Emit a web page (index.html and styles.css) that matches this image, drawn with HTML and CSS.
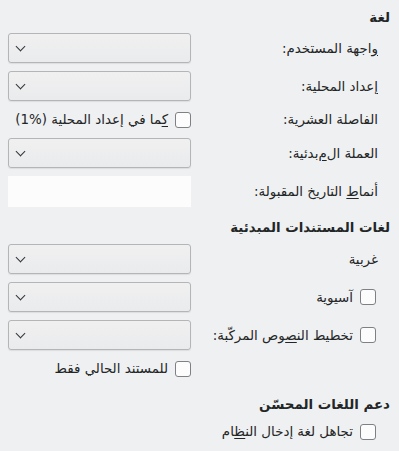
FILE: index.html
```
<!DOCTYPE html>
<html lang="ar" dir="rtl">
<head>
  <meta charset="UTF-8">
  <title>لغة</title>
  <link rel="stylesheet" href="styles.css">
</head>
<body>
  <div class="page">
    <h2 class="section-title">لغة</h2>
    <div class="form-grid">
      <label class="label"><u>و</u>اجهة المستخدم:</label>
      <div class="combo"><span class="chev"></span></div>

      <label class="label"><u>إ</u>عداد المحلية:</label>
      <div class="combo"><span class="chev"></span></div>

      <label class="label">الفاصلة العشرية:</label>
      <div class="check-row"><span class="check"></span><span><u>ك</u>ما في إعداد المحلية <span dir="ltr">(1%)</span></span></div>

      <label class="label">العملة ال<u>م</u>بدئية:</label>
      <div class="combo"><span class="chev"></span></div>

      <label class="label"><span>أنما<u>ط</u></span>&nbsp;<span>التاريخ المقبولة:</span></label>
      <div class="entry"></div>
    </div>

    <h2 class="section-title second">لغات المستندات المبدئية</h2>
    <div class="form-grid">
      <label class="label">غربية</label>
      <div class="combo"><span class="chev"></span></div>

      <div class="label check-row"><span class="check"></span><span>آسيوية</span></div>
      <div class="combo"><span class="chev"></span></div>

      <div class="label check-row"><span class="check"></span><span>تخطيط الن<u>ص</u>وص المركّبة:</span></div>
      <div class="combo"><span class="chev"></span></div>

      <div class="label"></div>
      <div class="check-row"><span class="check"></span><span>للمستند الحالي فقط</span></div>
    </div>

    <h2 class="section-title third">دعم اللغات المحسّن</h2>
    <div class="check-row single"><span class="check"></span><span>تجاهل لغة إدخال الن<u>ظ</u>ام</span></div>
  </div>
</body>
</html>
```
FILE: styles.css
```
body {
  margin: 0;
  background: #eff0f1;
  color: #232627;
  font-family: "DejaVu Sans", "Noto Sans", sans-serif;
  font-size: 13.4px;
}
.page {
  padding: 10px 9px 0 8px;
}
u {
  text-decoration-thickness: 1px;
  text-underline-offset: 2px;
}

.section-title {
  margin: 0;
  font-size: 13.4px;
  font-weight: bold;
  line-height: 16px;
}
.section-title.second {
  margin-top: 13px;
}
.section-title.third {
  margin-top: 18px;
}

.form-grid {
  display: grid;
  grid-template-columns: 1fr 183px;
  align-items: center;
  column-gap: 12px;
  row-gap: 8px;
  margin-top: 7px;
  padding-right: 12px;
}
.section-title.second + .form-grid {
  margin-top: 8px;
}
.label {
  display: flex;
  align-items: center;
  white-space: pre;
}

.combo {
  height: 28px;
  border: 1px solid #b3b5b6;
  border-radius: 3px;
  background: linear-gradient(#f0f0f1, #eaebec);
  box-shadow: 0 1px 1px rgba(0, 0, 0, 0.08);
  display: flex;
  align-items: center;
}
.chev {
  width: 6px;
  height: 6px;
  border-left: 1.3px solid #31363b;
  border-bottom: 1.3px solid #31363b;
  transform: rotate(-45deg);
  margin-right: auto;
  margin-left: 8px;
  margin-top: -4px;
}
.entry {
  height: 31px;
  background: #fcfcfc;
}

.check-row {
  display: flex;
  align-items: center;
  gap: 7px;
  min-height: 21px;
}
.label.check-row {
  padding-right: 2px;
}
.check {
  width: 14px;
  height: 14px;
  border: 1px solid #7e8184;
  border-radius: 3px;
  background: #fcfcfc;
  flex: none;
}
.check-row.single {
  margin-top: 8px;
  padding-right: 14px;
}
```
